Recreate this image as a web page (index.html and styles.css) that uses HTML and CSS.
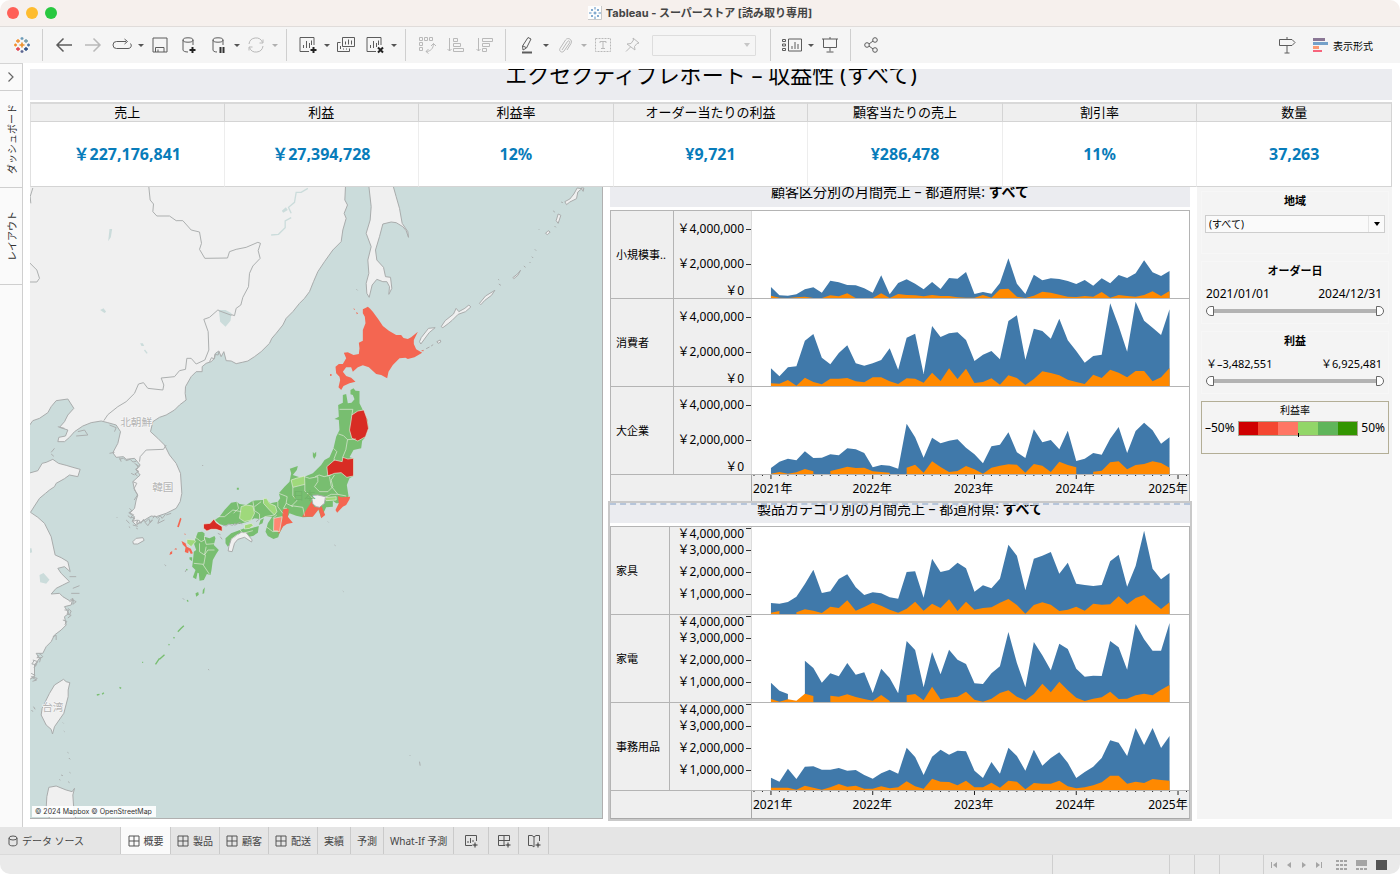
FILE: index.html
```html
<!DOCTYPE html>
<html lang="ja">
<head>
    <meta charset="UTF-8">
    <meta name="viewport" content="width=device-width, initial-scale=1.0">
    <title>Tableau - スーパーストア</title>
    <link rel="stylesheet" href="styles.css">
</head>
<body>
<div class="window">
    <header class="titlebar">
        <div class="lights">
            <span class="light red"></span>
            <span class="light yellow"></span>
            <span class="light green"></span>
        </div>
        <h1 class="window-title">
            <svg width="14" height="14" viewBox="0 0 14 14"><rect width="14" height="14" fill="#fdfdfd"/><path d="M13.500 0v13.500H0" fill="none" stroke="#c9c9c9"/><path d="M5.500 7h3M7 5.500v3M3 4h2M4 3v2M9 4h2M10 3v2M3 10h2M4 9v2M9 10h2M10 9v2M7 1v2.500M7 10.500V13M1 7h2.500M10.500 7H13" stroke="#5b8fc0" fill="none"/></svg>
            Tableau - スーパーストア [読み取り専用]
        </h1>
    </header>

    <div class="toolbar">
        <button class="tool" aria-label="Tableau"><svg viewBox="0 0 20 20"><g fill="none" stroke-width="1.300"><path d="M7.500 10h5M10 7.500v5" stroke="#eb912c" stroke-width="1.600"/><path d="M4 6h4M6 4v4" stroke="#f28e2b"/><path d="M12 6h4M14 4v4" stroke="#7099a6"/><path d="M4 14h4M6 12v4" stroke="#e03a4a"/><path d="M12 14h4M14 12v4" stroke="#1f457e"/><path d="M8.500 3.500h3M10 2v3" stroke="#6b9bb8"/><path d="M8.500 16.500h3M10 15v3" stroke="#5b6591"/><path d="M2 10h3M3.500 8.500v3" stroke="#f28e2b"/><path d="M15 10h3M16.500 8.500v3" stroke="#4e79a7"/></g></svg></button>
        <span class="sep"></span>
        <button class="tool" aria-label="元に戻す"><svg viewBox="0 0 20 20"><path d="M18 10H3M9.500 3.500L3 10l6.500 6.500" stroke-width="1.500"/></svg></button>
        <button class="tool off" aria-label="やり直す"><svg viewBox="0 0 20 20"><path d="M2 10h15M10.500 3.500L17 10l-6.500 6.500" stroke-width="1.500"/></svg></button>
        <button class="tool" aria-label="再生"><svg viewBox="0 0 20 20"><path d="M14 6.500H4.500a3.500 3.500 0 0 0 0 7h11.500a3 3 0 0 0 2.500-5M12.500 4l3 2.500-3 2.500"/></svg></button>
        <button class="caret" aria-label="再生メニュー"></button>
        <button class="tool" aria-label="保存"><svg viewBox="0 0 20 20"><path d="M3 3h14v14H3zM5.500 17v-4.500h8.500V17M8 17v-2.500"/></svg></button>
        <button class="tool" aria-label="新しいデータソース"><svg viewBox="0 0 20 20"><path d="M4 5v10c0 1 2 2 5 2M14 5v5"/><ellipse cx="9" cy="5" rx="5" ry="2.200"/><path d="M13.500 12v6M10.500 15h6" stroke="#222" stroke-width="2"/></svg></button>
        <button class="tool" aria-label="更新の一時停止"><svg viewBox="0 0 20 20"><path d="M5 5v10c0 1 1.500 2 4 2M15 5v5"/><ellipse cx="10" cy="5" rx="5" ry="2.200"/><path d="M12.500 12v6M15.500 12v6" stroke="#333" stroke-width="2"/></svg></button>
        <button class="caret" aria-label="更新メニュー"></button>
        <button class="tool off" aria-label="更新"><svg viewBox="0 0 20 20"><path d="M3 9a7 7 0 0 1 13.500-1.500M17 11a7 7 0 0 1-13.500 1.500M17 4.500V8h-3.500M3 15.500V12h3.500"/></svg></button>
        <button class="caret off" aria-label="更新オプション"></button>
        <span class="sep"></span>
        <button class="tool" aria-label="新しいワークシート"><svg viewBox="0 0 20 20"><path d="M16 10V2.500H2v14h9M5.500 13v-3M8.500 13V6M11.500 13V8M13.500 10V5.500"/><path d="M15.500 12v6M12.500 15h6" stroke="#222" stroke-width="2"/></svg></button>
        <button class="caret" aria-label="ワークシートメニュー"></button>
        <button class="tool" aria-label="複製"><svg viewBox="0 0 20 20"><path d="M6.500 2.500h12v9h-12zM4.500 7.500h-3v9h12v-3M9.500 9.500v-3M12.500 9.500v-5M15.500 9.500v-4M4.500 14v-3M7.500 14.500v-1M10.500 14.500v-1"/></svg></button>
        <button class="tool" aria-label="シートのクリア"><svg viewBox="0 0 20 20"><path d="M16 10V2.500H2v14h9M5.500 13v-3M8.500 13V6M11.500 12V8M13.500 10V5.500"/><path d="M13 12.500l5 5M18 12.500l-5 5" stroke="#222" stroke-width="2"/></svg></button>
        <button class="caret" aria-label="クリアメニュー"></button>
        <span class="sep"></span>
        <button class="tool off" aria-label="行と列の交換"><svg viewBox="0 0 20 20"><path d="M2.500 2.500h3v3h-3zM7.500 2.500h3v3h-3zM12.500 2.500h3v3h-3zM2.500 7.500h3v3h-3zM2.500 12.500h3v3h-3zM16.500 8.500c0 5-3 8-7.500 8M14 11l2.500-2.500L19 11M11.500 14L9 16.500l2.500 2"/></svg></button>
        <button class="tool off" aria-label="昇順で並べ替え"><svg viewBox="0 0 20 20"><path d="M3.500 3v13M1.500 14l2 2 2-2M7.500 3.500h4v3h-4zM7.500 8.500h7v3h-7zM7.500 13.500h10v3h-10z"/></svg></button>
        <button class="tool off" aria-label="降順で並べ替え"><svg viewBox="0 0 20 20"><path d="M3.500 3v13M1.500 14l2 2 2-2M7.500 3.500h10v3h-10zM7.500 8.500h7v3h-7zM7.500 13.500h4v3h-4z"/></svg></button>
        <span class="sep"></span>
        <button class="tool" aria-label="ハイライト"><svg viewBox="0 0 20 20"><path d="M11 2.500l3 1.500-4.500 9-3.500 2-.5-4zM6 11l3 1.500"/><path d="M5 17.500h10" stroke-width="2"/></svg></button>
        <button class="caret" aria-label="ハイライトメニュー"></button>
        <button class="tool off" aria-label="メンバーのグループ化"><svg viewBox="0 0 20 20"><path d="M7 15l5.500-8.500c1-1.500 3 0 2 1.500L9 16c-2 2.500-5.500 0-4-2.500L10.500 5c2.500-3.500 7.500 0 5.500 3.500L12 15"/></svg></button>
        <button class="caret off" aria-label="グループメニュー"></button>
        <button class="tool off" aria-label="マークラベルの表示"><svg viewBox="0 0 20 20"><path d="M2.500 3.500h15v13h-15z" stroke-dasharray="2 1"/><path d="M7 8V6.500h6V8M10 6.500v7M8 13.500h4"/></svg></button>
        <button class="tool off" aria-label="軸の固定"><svg viewBox="0 0 20 20"><path d="M11 3l6 5-2 .5-2.500 3 .5 3.500-8-6 4-.5L11.500 5zM8.500 12L4 16.500"/></svg></button>
        <div class="fit-box">
            <select class="fit" aria-label="表示サイズ" disabled><option></option></select>
            <span class="fit-arrow"></span>
        </div>
        <span class="sep"></span>
        <button class="tool" aria-label="カードの表示"><svg viewBox="0 0 20 20"><path d="M.5 4.500h3v2h-3zM.5 9h3v2h-3zM.5 13.500h3v2h-3zM6.500 4h13v12h-13zM10 14v-3M13 14V7M16 14V9"/></svg></button>
        <button class="caret" aria-label="カードメニュー"></button>
        <button class="tool" aria-label="プレゼンテーションモード"><svg viewBox="0 0 20 20"><path d="M2 4h16M3.500 4v8.500h13V4M10 2v2M10 12.500v4M6.500 17h7"/></svg></button>
        <span class="sep"></span>
        <button class="tool" aria-label="共有"><svg viewBox="0 0 20 20"><circle cx="5" cy="10" r="2.300"/><circle cx="13" cy="5" r="2.300"/><circle cx="13" cy="15" r="2.300"/><path d="M7 9l4-3M7 11l4 3"/></svg></button>
        <div class="toolbar-end">
            <button class="tool" aria-label="データガイド"><svg viewBox="0 0 20 20"><path d="M2.500 4.500H15l3 3-3 3H2.500zM10 2v2.500M10 10.500V18M7.500 18h5"/></svg></button>
            <button class="show-me">
                <svg width="16" height="16" viewBox="0 0 16 16"><path fill="#8a7795" d="M0 1h12v3H0z"/><path fill="#74a1c9" d="M0 5h15v3H0z"/><path fill="#fd9a72" d="M0 9h6v3H0z"/><path fill="#f7647c" d="M0 13h9v2H0z"/></svg>
                表示形式
            </button>
        </div>
    </div>

    <div class="workspace">
        <aside class="rail">
            <button class="rail-open" aria-label="開く"><svg width="8" height="12" viewBox="0 0 8 12"><path d="M1.500 1.500L6 6l-4.500 4.500" fill="none" stroke="#666" stroke-width="1.200"/></svg></button>
            <button class="rail-tab"><span>ダッシュボード</span></button>
            <button class="rail-tab"><span>レイアウト</span></button>
        </aside>

        <main class="dashboard">
            <h2 class="report-title"><span>エクセクティブレポート – 収益性 (すべて)</span></h2>

            <table class="kpis">
                <thead>
                    <tr><th>売上</th><th>利益</th><th>利益率</th><th>オーダー当たりの利益</th><th>顧客当たりの売上</th><th>割引率</th><th>数量</th></tr>
                </thead>
                <tbody>
                    <tr><td>￥227,176,841</td><td>￥27,394,728</td><td>12%</td><td>¥9,721</td><td>¥286,478</td><td>11%</td><td>37,263</td></tr>
                </tbody>
            </table>

            <div class="panels">
                <section class="map">
                    <svg class="map-art" viewBox="0 0 1719 1893" preserveAspectRatio="xMidYMid slice">
                        <!-- mainland, borders and lakes -->
                        <g transform="translate(-30 -21)">
                            <g class="land">
                                <path d="M27 18H978L976 60 984 75 974 100 980 115 970 150 965 185 940 210 915 245 895 275 882 305 870 335 855 355 840 370 820 395 800 415 790 435 770 460 757 475 750 490 725 515 705 530 685 543 668 547 650 551 635 543 620 542 613 515 605 530 598 513 588 520 585 535 575 545 560 550 548 560 548 575 530 575 515 590 498 620 497 640 500 660 480 675 465 690 440 705 420 712 400 725 393 755 415 775 435 795 450 825 470 850 483 880 487 940 482 965 470 985 440 1000 410 1010 395 1008 375 1020 350 1035 338 1024 345 1010 330 1000 345 985 350 960 355 945 345 930 340 905 362 885 350 870 362 855 345 835 320 838 312 830 290 832 280 818 295 790 303 755 290 735 265 728 245 723 215 728 190 738 165 755 150 772 135 785 115 785 118 772 138 768 145 750 120 742 135 725 145 705 163 685 145 657 110 662 95 680 85 698 60 715 40 722 27 740z"/>
                                <path d="M27 880L55 872 68 850 80 847 100 838 117 850 140 856 160 862 182 868 175 890 150 885 135 896 110 910 105 920 90 930 78 940 60 955 45 978 33 997 55 1012 75 1030 95 1070 107 1125 125 1133 145 1145 152 1175 135 1160 115 1165 125 1180 150 1205 130 1215 110 1225 95 1242 120 1240 130 1250 150 1262 160 1255 155 1275 135 1280 148 1300 135 1310 140 1335 125 1350 105 1365 95 1385 80 1400 70 1420 50 1420 60 1435 45 1455 45 1490 27 1500z"/>
                            </g>
                            <g class="border">
                                <path d="M388 21L392 60 402 72 400 95 412 108 450 108 470 122 490 122 515 150 540 156 546 190 540 208 556 235 624 234 630 215 650 208 680 202 715 187 723 190 716 212 722 235 700 258 690 280 687 320 670 352 664 375 650 385 645 407 595 390 570 412 553 418 566 455 568 510 556 540 530 552 515 535 502 535 498 568 480 572 465 590 425 594 433 615 430 630 385 625 372 608 357 612 345 640 320 665 295 680 265 704 253 722"/>
                                <path d="M30 248L52 270 60 295 52 306 30 306M40 24L32 50 34 70M440 795L432 808 380 810 362 830 360 845M115 740l20 5M175 755l20-5 10 15-35 3M270 735l20 8-5 12M340 905l12 5-8 15 10 20-10 15"/>
                                <path d="M335 1015l-10-8M320 1020l10 10M340 1035l15 4M375 1025l10 12 12-18M420 1015l-5 15 20-10M440 1005l15-5M270 820l15-3M300 833l5 12M345 850l15 10M335 880l10 5M105 805l-10 12M95 822l8 7M150 1190l20 0M160 1225l20-8M155 1240l25 0M145 1285l10 8-5 12M160 1260l10 5M60 1420l10 10-12 8M40 1440l15 5-10 15M35 1490l18 5-8 8"/>
                                <path d="M330 985l8 8-10 5 14 6-8 8 12 2-6 10 14-4-2 12 10-6M350 1028l8-8 6 10 8-12 6 8 10-10 4 12 8-8M400 1015l6-8 8 8 8-8 6 8 10-12M292 1012l2 2M328 1040l4 3M350 1044l5 3M300 838l12-4 8 8 12-4 8 8 10-2M350 852l6 10-8 6 10 6-12 8 8 6M570 545l6-12 8 4 2-14 10 2 2-10M150 1265l12-6-2 14 10-8M135 1290l12 0-4 12 12 4-10 8M130 1320l12 4-6 10M100 1370l10-4 0 14M60 1425l-8 8 12 0-4 14M45 1440l-8 12 14 2-8 10M35 1480l12 6-10 6 14 8-12 4"/>
                            </g>
                            <path class="lake" d="M598 390l20 0 18 10-3 22-15 18-16-15zM270 147l8 0-4 25-8 12zM242 390l10-5 8 10-5 4zM787 92l12-10 6 8-14 8zM362 490l8 0 4 8-8 0z"/>
                            <path class="river" d="M755 165l22-2 20-20 0-20 18-10M815 100l-8-18 18-15 5-30 15 0 20-12M375 510l8 10"/>
                            <path class="border" d="M598 392L636 406"/>
                            <path class="lake" d="M60 1185l12-6 18 20-10 12-18-4zM28 1105l8 0 2 12-8 2z"/>
                        </g>

                        <!-- Sakhalin and Kuril islands -->
                        <g class="land" transform="translate(810 -21)">
                            <path d="M208 18L215 80 212 120 200 160 215 200 205 240 208 280 200 310 202 340 209 352 218 315 232 298 250 305 262 305 270 320 268 343 277 325 273 292 258 290 252 262 232 240 228 210 240 170 250 132 275 126 290 128 310 140 320 152 327 172 325 155 308 130 300 85 290 50 281 18z"/>
                            <path d="M360 485l5-12 22-28 20-2-18 15-25 34zM425 440l12-18 25-20 8-17 8 10 18-10 12-10 6 6-16 14-22 8-18 18-12 10-16 12zM540 370l18-22 28-17-10 15-20 15-12 13zM640 293l15-12 8-10-8 15-12 10zM796 65l15-8 12-15 10-18 14 2-12 10-4 20-20 10-10 8zM845 24l8 0-2 10zM770 122l6-20 8 4-8 24zM738 160l8-8 6 4-8 8zM762 92l3 5M765 138l4 4M785 66l5 2M706 208l4 4M697 230l4 4M690 246l3 3M673 258l5 4M718 148l2 2M598 312l6 4M596 298l3 2M412 485l10-5 2 6-8 4zM395 498l6-4M380 506l10-5M171 328l3 3"/>
                        </g>

                        <!-- Hokkaido -->
                        <path class="p-salmon" transform="translate(810 -21)" d="M190 388L198 384 205 380 212 386 220 395 238 420 250 438 268 452 290 465 305 465 312 474 325 477 335 472 355 455 343 480 343 492 350 508 368 518 345 532 325 537 318 533 300 535 280 555 267 575 263 595 245 585 230 582 208 562 190 556 175 562 160 575 155 562 140 562 130 575 140 588 155 593 168 605 150 610 132 618 125 630 117 622 122 600 120 590 110 580 108 560 118 552 130 552 140 535 133 518 145 517 162 525 178 522 180 505 178 488 190 482 190 450 198 430 196 410 190 400zM92 582l4 0 0 6-4 0zM162 384l4 4-2 3zM170 396l6 4-4 3zM364 513l8-4 0 5z"/>

                        <!-- Honshu, Shikoku, Kyushu -->
                        <g transform="translate(360 549)">
                            <g class="p-green">
                                <path d="M580 75L590 72 595 100 606 98 615 88 610 75 603 73 603 60 612 55 618 62 630 63 630 100 640 120 655 150 657 175 645 205 638 212 635 235 612 240 600 262 612 265 612 318 600 325 592 345 597 378 590 395 570 400 560 400 550 392 550 410 530 412 515 443 505 415 490 430 488 440 460 442 440 437 420 430 415 440 400 470 390 490 386 502 372 507 355 498 348 485 355 460 368 440 345 440 330 447 315 445 295 455 270 462 240 462 225 467 210 462 196 450 210 440 225 420 245 398 262 395 270 402 290 405 310 392 340 390 350 385 362 400 385 395 392 385 388 370 405 350 420 335 425 310 421 296 445 288 442 300 430 315 450 322 465 320 490 310 515 285 525 270 540 262 552 235 560 200 570 180 568 150 555 147 568 140 566 105 580 98z"/>
                                <path d="M228 505L245 490 285 475 305 475 328 468 325 488 312 497 300 500 262 500 245 520 235 530 228 520zM328 465l5-15 10-5-4 15z"/>
                                <path d="M145 487L158 485 165 490 165 500 180 505 195 498 198 505 193 525 208 540 200 552 190 570 186 600 183 615 172 612 163 630 150 632 148 610 144 608 140 628 130 622 138 600 128 590 130 575 133 545 140 540 133 520 140 500zM120 562l8 0 0 12-8-6zM138 670l8-4 2 8-8 6zM160 660l6-8-2 18-5 2zM490 245l4 6 6-6 0 12-6 10-4-8zM262 353l6 0 0 6-6 0z"/>
                            </g>
                            <path class="p-lime" d="M425 330L440 325 465 318 466 343 430 352zM525 383L560 380 560 390 530 392zM342 385L352 386 360 400 378 408 382 425 375 435 358 418 342 400zM275 410L290 405 310 408 315 430 305 450 285 455 270 445zM285 465L305 460 312 466 300 475 285 477zM112 508L135 510 138 515 125 530 112 520z"/>
                            <path class="p-red" d="M607 135L625 123 643 120 652 145 657 175 648 200 625 213 607 205 600 180 605 150zM532 290L555 270 578 275 580 262 595 267 612 265 612 318 592 322 575 308 555 310 535 318zM162 462L182 460 193 447 200 458 218 470 218 484 200 478 185 478 172 483 162 475z"/>
                            <path class="p-salmon" d="M565 378L575 382 602 380 600 388 590 405 580 410 563 428 558 420 568 400zM487 394L495 412 515 405 527 435 515 445 508 418 490 440 458 440 470 420zM400 420L410 415 418 418 415 440 430 458 412 462 400 470 388 492 385 480 398 450zM96 513L108 520 112 530 124 536 130 550 124 552 118 540 116 550 106 546 108 532 100 524zM92 443L96 446 88 472 83 470zM62 547l6-4 0 8-8 4zM74 538l6-4 2 5zM105 490l4 3-3 2z"/>
                            <path class="p-pink" d="M373 445L398 440 390 485 372 482z"/>
                            <path class="land" d="M487 385L490 376 505 375 528 380 525 400 510 412 500 410 490 402zM238 530L245 508 262 495 275 487 290 488 308 510 306 516 285 502 265 508 255 520 248 545 236 543z"/>
                            <g class="pref">
                                <path d="M570 118h40l-3 17M567 192l15 5 12 12 25-2M594 209l-5 30-10 24M552 235l10 10-8 20 0 8M497 320l12-5 15 5 20-5M465 320l15 5 25-5 0 15-10 15 15 15 25 0 15-15-5-20 10-15M540 320l5 28 20 25 25 5M565 373l-20 0-20 10M430 352l0 25 12 15-15 15M466 343l0 20 22 20M388 370l25 10-3 20 20 10M410 400l-8 15 10 0M425 407l35 5 5 25M385 395l0 15 15 20M382 435l-12 10M310 392l5 30 15 10 0 15M262 395l5 20-15 15M205 440l20 0 25-20 25 5M315 410l20-15M345 440l30-5M350 470l20 15 15-2"/>
                                <path d="M135 500l20 15 10-5 0-12M165 505l5 18 25-2M150 520l0 25 15 10 5-25M165 555l10-15 20 0M133 580l30 3 5-28M160 583l20 30M270 478l10 12 30-8M245 508l20-15"/>
                            </g>
                            <path class="border" d="M158 285l3 3M46 584l3 3M220 465l10 3 8-6 10 4 10-6M320 455l10-8M255 466l15-8 8 4M100 685l4 4M535 455l2 2M555 525l3 2M580 663l2 2M110 600l-3 6M205 490l8 4M212 500l6 8"/>
                        </g>

                        <!-- southern islands, Taiwan, Jeju, Luzon -->
                        <g transform="translate(-30 939)">
                            <g class="land">
                                <path d="M132 538L140 545 151 548 146 570 146 590 133 640 105 680 99 702 95 688 80 675 65 645 68 625 80 600 90 580 105 555zM340 125L350 115 370 113 374 121 355 132 342 132zM88 862L110 858 140 870 158 875 165 865 160 885 162 915 168 955 90 955 80 925 82 890z"/>
                                <path d="M144 757l3 2M148 774l4 4M150 817l3 2M125 825l5 2M146 845l4 3M120 838l2 3M130 668l2 2M133 693l2 2M42 620l5 8M36 630l4 5M436 195l2 2M566 508l3 2M1170 765l2 2M1200 785l2 12"/>
                            </g>
                            <path class="isle" d="M475 395l10-10 8-8M462 412l3 3M447 433l3 2M408 493l12-18M420 478l15-14M232 585l8-2M248 583l5-5M300 562l5 3M368 487l3 0M500 208l4 2M503 300l3 5"/>
                        </g>
                        <g class="places">
                            <text x="272" y="716">北朝鮮</text>
                            <text x="368" y="911">韓国</text>
                            <text x="38" y="1572">台湾</text>
                        </g>
                        <text class="japan" x="790" y="938">日本</text>
                    </svg>
                    <p class="credit">© 2024 Mapbox © OpenStreetMap</p>
                </section>

                <div class="charts">
                    <section class="chart segment">
                        <h3 class="chart-title"><span>顧客区分別の月間売上 – 都道府県: <b>すべて</b></span></h3>
                        <div class="chart-body">
                            <div class="row">
                                <div class="row-name">小規模事..</div>
                                <div class="y-axis"><span>￥4,000,000</span><span>￥2,000,000</span><span>￥0</span></div>
                                <svg class="plot" data-series="small"></svg>
                            </div>
                            <div class="row">
                                <div class="row-name">消費者</div>
                                <div class="y-axis"><span>￥4,000,000</span><span>￥2,000,000</span><span>￥0</span></div>
                                <svg class="plot" data-series="consumer"></svg>
                            </div>
                            <div class="row">
                                <div class="row-name">大企業</div>
                                <div class="y-axis"><span>￥4,000,000</span><span>￥2,000,000</span><span>￥0</span></div>
                                <svg class="plot" data-series="corporate"></svg>
                            </div>
                            <div class="x-axis">
                                <div class="x-scale">
                                    <svg class="ticks"></svg>
                                    <div class="years"><span>2021年</span><span>2022年</span><span>2023年</span><span>2024年</span><span>2025年</span></div>
                                </div>
                            </div>
                        </div>
                    </section>

                    <section class="chart category">
                        <h3 class="chart-title"><span>製品カテゴリ別の月間売上 – 都道府県: <b>すべて</b></span></h3>
                        <div class="chart-body">
                            <div class="row">
                                <div class="row-name">家具</div>
                                <div class="y-axis"><span>￥4,000,000</span><span>￥3,000,000</span><span>￥2,000,000</span><span>￥1,000,000</span></div>
                                <svg class="plot" data-series="furniture"></svg>
                            </div>
                            <div class="row">
                                <div class="row-name">家電</div>
                                <div class="y-axis"><span>￥4,000,000</span><span>￥3,000,000</span><span>￥2,000,000</span><span>￥1,000,000</span></div>
                                <svg class="plot" data-series="tech"></svg>
                            </div>
                            <div class="row">
                                <div class="row-name">事務用品</div>
                                <div class="y-axis"><span>￥4,000,000</span><span>￥3,000,000</span><span>￥2,000,000</span><span>￥1,000,000</span></div>
                                <svg class="plot" data-series="office"></svg>
                            </div>
                            <div class="x-axis">
                                <div class="x-scale">
                                    <svg class="ticks"></svg>
                                    <div class="years"><span>2021年</span><span>2022年</span><span>2023年</span><span>2024年</span><span>2025年</span></div>
                                </div>
                            </div>
                        </div>
                    </section>
                </div>

                <aside class="filters">
                    <div class="filter">
                        <label class="filter-title" for="region">地域</label>
                        <div class="select-box">
                            <select id="region"><option>(すべて)</option></select>
                            <span class="arrow"></span>
                        </div>
                    </div>
                    <div class="filter">
                        <h4 class="filter-title">オーダー日</h4>
                        <div class="range-values dates"><label for="date-from">2021/01/01</label><label for="date-to">2024/12/31</label></div>
                        <div class="range">
                            <input type="range" class="from" id="date-from" min="0" max="100" value="0">
                            <input type="range" class="to" id="date-to" min="0" max="100" value="100">
                        </div>
                    </div>
                    <div class="filter">
                        <h4 class="filter-title">利益</h4>
                        <div class="range-values"><label for="profit-from">￥–3,482,551</label><label for="profit-to">￥6,925,481</label></div>
                        <div class="range">
                            <input type="range" class="from" id="profit-from" min="0" max="100" value="0">
                            <input type="range" class="to" id="profit-to" min="0" max="100" value="100">
                        </div>
                    </div>
                    <div class="filter legend">
                        <h4 class="filter-title">利益率</h4>
                        <div class="legend-scale">
                            <span>–50%</span>
                            <div class="ramp"><i></i><i></i><i></i><i></i><i></i><i></i></div>
                            <span>50%</span>
                        </div>
                    </div>
                </aside>
            </div>
        </main>
    </div>

    <nav class="sheets">
        <button class="sheet source"><svg width="10" height="12" viewBox="0 0 10 12"><path d="M1 3v6c0 2.500 8 2.500 8 0V3"/><ellipse cx="5" cy="3" rx="4" ry="2"/></svg>データ ソース</button>
        <button class="sheet active"><svg width="12" height="12" viewBox="0 0 12 12"><path d="M1 1h10v10H1zM6 1v10M1 6h10"/></svg>概要</button>
        <button class="sheet"><svg width="12" height="12" viewBox="0 0 12 12"><path d="M1 1h10v10H1zM6 1v10M1 6h10"/></svg>製品</button>
        <button class="sheet"><svg width="12" height="12" viewBox="0 0 12 12"><path d="M1 1h10v10H1zM6 1v10M1 6h10"/></svg>顧客</button>
        <button class="sheet"><svg width="12" height="12" viewBox="0 0 12 12"><path d="M1 1h10v10H1zM6 1v10M1 6h10"/></svg>配送</button>
        <button class="sheet plain">実績</button>
        <button class="sheet plain">予測</button>
        <button class="sheet plain">What-If 予測</button>
        <button class="sheet new" aria-label="新しいワークシート"><svg width="14" height="14" viewBox="0 0 14 14"><path d="M12.500 7V1.500h-11v10H8M4 9V7M6.500 9V4M9 8V6"/><path class="plus" d="M11 8.500v5M8.500 11h5"/></svg></button>
        <button class="sheet new" aria-label="新しいダッシュボード"><svg width="14" height="14" viewBox="0 0 14 14"><path d="M12.500 7V1.500h-11v10H8M7 1.500v10M1.500 6.500h11"/><path class="plus" d="M11 8.500v5M8.500 11h5"/></svg></button>
        <button class="sheet new" aria-label="新しいストーリー"><svg width="14" height="14" viewBox="0 0 14 14"><path d="M12.500 7V1.500H9l-2 1.500-2-1.500H1.500v10H5L7 13V3"/><path class="plus" d="M11 8.500v5M8.500 11h5"/></svg></button>
    </nav>

    <footer class="status">
        <span class="cell wide"></span>
        <span class="cell"></span>
        <span class="cell"></span>
        <span class="cell mid"></span>
        <div class="pager">
            <button aria-label="最初"><svg width="8" height="8" viewBox="0 0 8 8"><path d="M1 1h1v6H1zM7 1v6L3 4z"/></svg></button>
            <button aria-label="前へ"><svg width="8" height="8" viewBox="0 0 8 8"><path d="M6 1v6L2 4z"/></svg></button>
            <button aria-label="次へ"><svg width="8" height="8" viewBox="0 0 8 8"><path d="M2 1v6l4-3z"/></svg></button>
            <button aria-label="最後"><svg width="8" height="8" viewBox="0 0 8 8"><path d="M6 1h1v6H6zM1 1v6l4-3z"/></svg></button>
        </div>
        <div class="views">
            <button aria-label="シートソーター"><svg width="12" height="10" viewBox="0 0 12 10"><path d="M0 0h3v2H0zM4 0h3v2H4zM8 0h3v2H8zM0 4h3v2H0zM4 4h3v2H4zM8 4h3v2H8zM0 8h3v2H0zM4 8h3v2H4zM8 8h3v2H8z"/></svg></button>
            <button aria-label="フィルムストリップ"><svg width="12" height="10" viewBox="0 0 12 10"><path d="M0 0h11v6H0zM0 8h3v2H0zM4 8h3v2H4zM8 8h3v2H8z"/></svg></button>
            <button class="on" aria-label="タブの表示"><svg width="12" height="10" viewBox="0 0 12 10"><path d="M0 0h11v10H0z"/></svg></button>
        </div>
    </footer>
</div>
<script src="charts.js"></script>
</body>
</html>
```

FILE: styles.css
```css
* {
    margin: 0;
    padding: 0;
    box-sizing: border-box;
}

body {
    font-family: "Noto Sans", "Noto Sans CJK JP", sans-serif;
    font-size: 11px;
    color: #000;
    background: #fff;
}

button {
    font: inherit;
    color: inherit;
    background: none;
    border: none;
    cursor: pointer;
}

svg {
    display: block;
}

.window {
    display: flex;
    flex-direction: column;
    min-height: 100vh;
    border-radius: 10px;
    overflow: hidden;
    background: #fff;
}

/* title bar */
.titlebar {
    display: grid;
    grid-template-columns: 1fr auto 1fr;
    align-items: center;
    height: 27px;
    padding: 0 7px;
    background: #f6f0ed;
    border-bottom: 1px solid #e0dcda;
}

.lights {
    display: flex;
    gap: 7px;
}

.light {
    width: 12px;
    height: 12px;
    border-radius: 50%;
}

.light.red { background: #ff5f57; }
.light.yellow { background: #febc2e; }
.light.green { background: #28c840; }

.window-title {
    display: flex;
    align-items: center;
    gap: 4px;
    font-family: Inter, "Noto Sans CJK JP", sans-serif;
    font-size: 11px;
    font-weight: 700;
    line-height: 16px;
    color: #444;
}

/* toolbar */
.toolbar {
    display: flex;
    align-items: center;
    gap: 8px;
    height: 36px;
    padding: 0 27px 0 12px;
    background: #f5f5f5;
}

.tool {
    width: 20px;
    height: 20px;
    flex: none;
}

.tool + .tool {
    margin-left: 1px;
}

.tool svg {
    width: 20px;
    height: 20px;
    fill: none;
    stroke: #5c5c5c;
}

.tool.off svg {
    stroke: #b9b9b9;
}

.caret {
    width: 8px;
    height: 20px;
    margin: 0 -3px;
    flex: none;
}

.caret::before {
    content: "";
    display: block;
    width: 0;
    margin: 0 auto;
    border: 3px solid transparent;
    border-top-color: #555;
    border-bottom: none;
}

.caret.off::before {
    border-top-color: #b0b0b0;
}

.sep {
    width: 1px;
    height: 32px;
    margin: 0 3px 0 2px;
    background: #cfcfcf;
}

.fit-box {
    position: relative;
    margin: 0 4px 0 2px;
}

.fit {
    display: block;
    width: 104px;
    height: 21px;
    border: 1px solid #d3d3d3;
    border-radius: 1px;
    appearance: none;
    background: #f5f5f5;
}

.fit-arrow {
    position: absolute;
    top: 8px;
    right: 6px;
    border: 3px solid transparent;
    border-top: 4px solid #c6c6c6;
    border-bottom: none;
    pointer-events: none;
}

.toolbar-end {
    display: flex;
    align-items: center;
    gap: 16px;
    margin-left: auto;
}

.show-me {
    display: flex;
    align-items: center;
    gap: 4px;
    font-size: 10px;
}

/* workspace */
.workspace {
    display: flex;
    flex: 1;
}

.rail {
    display: flex;
    flex-direction: column;
    flex: none;
    width: 23px;
    background: #fafafa;
    border-right: 1px solid #cfcfcf;
    border-top: 1px solid #d4d4d4;
}

.rail-open {
    display: flex;
    align-items: center;
    justify-content: center;
    height: 27px;
    border-bottom: 1px solid #cfcfcf;
}

.rail-tab {
    display: flex;
    align-items: center;
    justify-content: center;
    height: 97px;
    border-bottom: 1px solid #cfcfcf;
    font-size: 10px;
    color: #333;
}

.rail-tab span {
    writing-mode: vertical-rl;
    text-orientation: sideways;
    transform: rotate(180deg);
}

.dashboard {
    flex: 1;
    min-width: 0;
    padding: 6px 8px 7px 7px;
}

.report-title {
    display: flex;
    justify-content: center;
    height: 31px;
    overflow: hidden;
    background: #ebecf0;
    font-size: 22px;
    font-weight: 400;
}

.report-title span {
    margin-top: -6px;
    line-height: 22px;
    height: 22px;
    white-space: nowrap;
}

.kpis {
    width: 100%;
    margin-top: 2px;
    table-layout: fixed;
    border-collapse: separate;
    border-spacing: 0;
    text-align: center;
}

.kpis th {
    height: 20px;
    line-height: 17px;
    font-size: 13px;
    font-weight: 400;
    background: #efefef;
    border-top: 2px solid #d9d9d9;
    border-bottom: 1px solid #d4d4d4;
    border-right: 1px solid #d4d4d4;
}

.kpis td {
    height: 65px;
    font-size: 16px;
    font-weight: 700;
    line-height: 20px;
    color: #087cba;
    border-right: 1px solid #ededed;
    border-bottom: 1px solid #d4d4d4;
}

.kpis th:first-child,
.kpis td:first-child {
    border-left: 1px solid #e0e0e0;
}

.kpis td:last-child {
    border-right-color: #d4d4d4;
}

.panels {
    display: grid;
    grid-template-columns: 573fr 580fr 195px;
    gap: 7px;
}

/* map */
.map {
    position: relative;
    background: #cbdcdb;
    border-right: 1px solid #b0b0b0;
    border-bottom: 1px solid #b0b0b0;
    overflow: hidden;
}

.map-art {
    width: 100%;
    height: 100%;
}

.land {
    fill: #f0f0f0;
    stroke: #a9acac;
    stroke-width: 3;
}

.border {
    fill: none;
    stroke: #acafaf;
    stroke-width: 3;
}

.lake {
    fill: #cbdcdb;
}

.river {
    fill: none;
    stroke: #cbdcdb;
    stroke-width: 4;
}

.p-green { fill: #78be70; }
.p-lime { fill: #9fd97b; }
.p-red { fill: #d82c24; }
.p-salmon { fill: #f46651; }
.p-pink { fill: #ff8673; }

.p-lime,
.p-red,
.p-pink {
    stroke: #e4eadd;
    stroke-width: 2;
}

.pref {
    fill: none;
    stroke: #e4eadd;
    stroke-width: 2;
}

.isle {
    fill: none;
    stroke: #78be70;
    stroke-width: 4;
}

.places text {
    font-size: 32px;
    fill: #b4b4b4;
    stroke: #f6f6f6;
    stroke-width: 4;
    paint-order: stroke;
}

.japan {
    font-size: 34px;
    fill: #70b469;
}

.credit {
    position: absolute;
    left: 2px;
    bottom: 1px;
    padding: 0 4px 0 3px;
    background: rgba(255, 255, 255, 0.9);
    font-family: Inter, sans-serif;
    font-size: 7px;
    line-height: 11px;
    color: #333;
}

/* charts */
.chart-title {
    display: flex;
    justify-content: center;
    height: 20px;
    overflow: hidden;
    background: #ebecf0;
    font-size: 14px;
    font-weight: 400;
}

.chart-title span {
    margin-top: -5px;
    height: 20px;
    line-height: 20px;
    white-space: nowrap;
}

.chart-body {
    margin-top: 3px;
    border: 1px solid #b4b4b4;
    border-bottom-color: #a8a8a8;
}

.category {
    box-shadow: 0 0 0 2px #c9c9c9;
}

.category .chart-title {
    border-top: 2px dashed #b6c5da;
}

.category .chart-title span {
    margin-top: -6px;
}

.row {
    display: grid;
    grid-template-columns: 63px 78px 1fr;
    height: 88px;
    border-bottom: 1px solid #b4b4b4;
}

.category .row {
    grid-template-columns: 59px 82px 1fr;
}

.row-name {
    display: flex;
    align-items: center;
    padding: 0 0 2px 5px;
    background: #efefef;
    border-right: 1px solid #b4b4b4;
    white-space: nowrap;
}

.y-axis {
    display: flex;
    flex-direction: column;
    gap: 23px;
    padding-top: 12px;
    background: #efefef;
    border-right: 1px solid #dcdcdc;
    font-size: 12px;
}

.y-axis span {
    display: flex;
    align-items: center;
    justify-content: flex-end;
    gap: 2px;
    height: 12px;
    line-height: 12px;
}

.y-axis span::after {
    content: "";
    width: 5px;
    height: 1px;
    background: #333;
}

.segment .y-axis span:last-child {
    margin-top: -8px;
}

.segment .y-axis span:last-child::after {
    background: none;
}

.category .y-axis {
    gap: 10px;
    padding-top: 1px;
}

.category .y-axis span:nth-child(2) {
    margin-top: -6px;
}

.category .y-axis span:first-child {
    align-items: flex-start;
}

.plot {
    width: 100%;
    height: 87px;
}

.plot .sales { fill: #4079aa; }
.plot .profit { fill: #ff8900; }

.x-axis {
    height: 27px;
    padding-left: 140px;
    background: #efefef;
}

.x-scale {
    height: 27px;
    border-left: 1px solid #a8a8a8;
}

.ticks {
    width: 100%;
    height: 4px;
}

.ticks path {
    stroke: #222;
    stroke-width: 1;
    vector-effect: non-scaling-stroke;
}

.years {
    display: grid;
    grid-template-columns: 100fr 102fr 102fr 93fr 41fr;
    padding-left: 1px;
    font-size: 12px;
    line-height: 20px;
    white-space: nowrap;
}

/* filters */
.filters {
    display: flex;
    flex-direction: column;
    gap: 7px;
    padding: 4px 3px 4px 4px;
    background: #f4f4f4;
}

.filter {
    height: 63px;
    padding: 0 3px;
    border: 1px solid #f7f7f7;
}

.filter-title {
    display: block;
    font-size: 11px;
    font-weight: 700;
    line-height: 18px;
    text-align: center;
}

.select-box {
    position: relative;
    margin-top: 5px;
}

.select-box select {
    display: block;
    width: 100%;
    height: 18px;
    padding-left: 3px;
    appearance: none;
    border: 1px solid #cdcdcd;
    border-radius: 0;
    background: #fafafa;
    font-family: inherit;
    font-size: 10px;
    color: #000;
}

.arrow {
    position: absolute;
    top: 1px;
    right: 1px;
    width: 16px;
    height: 16px;
    border-left: 1px solid #e4e4e4;
    pointer-events: none;
}

.arrow::before {
    content: "";
    display: block;
    width: 0;
    margin: 6px auto 0;
    border: 3px solid transparent;
    border-top: 4px solid #000;
    border-bottom: none;
}

.range-values {
    display: flex;
    justify-content: space-between;
    margin-top: 5px;
    padding: 0 3px 0 1px;
    font-size: 11px;
    line-height: 18px;
}

.range-values.dates {
    font-size: 12px;
}

.range {
    display: grid;
    align-items: center;
    height: 16px;
    padding: 0 1px;
}

.range input {
    grid-area: 1 / 1;
    width: 100%;
    height: 10px;
    appearance: none;
    background: none;
    pointer-events: none;
}

.range .from {
    background: linear-gradient(#b3b3b3, #b3b3b3) center / 164px 4px no-repeat;
}

.range input::-webkit-slider-thumb {
    appearance: none;
    width: 8px;
    height: 10px;
    background: #fff;
    border: 1px solid #666;
    border-radius: 5px 0 0 5px;
    pointer-events: auto;
}

.range .to::-webkit-slider-thumb {
    border-radius: 0 5px 5px 0;
}

.legend {
    height: 53px;
    border-color: #b3ae96;
}

.legend .filter-title {
    font-size: 10px;
    font-weight: 400;
    line-height: 16px;
}

.legend-scale {
    display: flex;
    align-items: center;
    gap: 3px;
    margin-top: 2px;
    font-size: 12px;
    line-height: 16px;
}

.ramp {
    position: relative;
    display: flex;
    flex: 1;
    height: 15px;
    border: 1px solid #a9a58f;
}

.ramp::after {
    content: "";
    position: absolute;
    left: 50%;
    bottom: -2px;
    width: 1px;
    height: 4px;
    background: #000;
}

.ramp i {
    flex: 1;
}

.ramp i:nth-child(1) { background: #cf0000; }
.ramp i:nth-child(2) { background: #f44730; }
.ramp i:nth-child(3) { background: #ff7664; }
.ramp i:nth-child(4) { background: #92d668; }
.ramp i:nth-child(5) { background: #60b55a; }
.ramp i:nth-child(6) { background: #339500; }

/* sheet tabs */
.sheets {
    display: flex;
    height: 28px;
    background: #e5e5e5;
    border-bottom: 1px solid #dadada;
}

.sheet {
    display: flex;
    align-items: center;
    justify-content: center;
    gap: 4px;
    width: 49px;
    border-right: 1px solid #cacaca;
    font-size: 10px;
    color: #444;
    white-space: nowrap;
}

.sheet svg {
    fill: none;
    stroke: #555;
}

.sheet .plus {
    stroke: #333;
}

.sheet.source {
    width: 121px;
    justify-content: flex-start;
    padding-left: 8px;
}

.sheet.active {
    background: #fafafa;
    width: 50px;
}

.sheet.plain {
    width: auto;
    padding: 0 6px;
}

.sheet.new {
    width: 30px;
}

.sheet.plain + .new {
    width: 35px;
}

.status {
    display: flex;
    justify-content: flex-end;
    height: 19px;
    background: #eaeaea;
}

.cell {
    width: 25px;
    border-left: 1px solid #cfcfcf;
}

.cell.wide {
    width: 117px;
}

.cell.mid {
    width: 44px;
}

.pager,
.views {
    display: flex;
    align-items: center;
    border-left: 1px solid #cfcfcf;
}

.pager {
    gap: 7px;
    padding: 0 7px 0 6px;
    fill: #a5a5a5;
}

.views {
    gap: 8px;
    padding: 0 12px 0 6px;
    border-left: none;
    fill: #a5a5a5;
}

.views .on {
    fill: #555;
}
```

FILE: charts.js
```js
// Monthly series, Jan 2021 - Dec 2024. Values are y positions on a grid
// three units to the pixel; base is the zero line, null is a missing month.
const series = {
    small: {
        base: 354,
        sales: [321,346,347,343,328,322,338,302,307,315,316,325,338,286,343,309,298,311,328,306,327,294,296,276,342,336,341,309,235,311,342,284,301,295,297,303,312,300,317,295,310,285,294,280,241,277,288,273],
        profit: [347,353,354,352,350,354,354,346,349,340,354,354,354,340,354,342,345,346,349,345,348,348,352,353,353,345,353,328,326,350,354,347,335,338,344,350,351,348,350,336,353,345,348,350,345,334,348,333]
    },
    consumer: {
        base: 620,
        sales: [567,591,564,561,484,464,535,555,521,498,552,559,552,542,507,571,475,463,584,440,473,462,459,482,545,526,515,540,425,408,541,448,455,478,418,483,515,550,530,526,372,440,517,367,424,445,467,390],
        profit: [612,613,602,619,595,608,615,598,598,596,606,609,594,594,606,614,597,598,610,580,605,567,599,568,611,608,597,616,588,596,617,599,576,581,588,601,608,614,586,596,571,580,594,575,575,606,594,566]
    },
    corporate: {
        base: 885,
        sales: [867,848,839,844,817,837,836,826,829,808,811,822,865,858,860,869,734,775,836,776,793,785,781,806,826,853,802,797,760,820,837,751,790,783,811,755,846,839,822,827,779,744,822,756,731,754,794,775],
        profit: [884,879,884,880,870,877,null,876,870,863,867,866,877,879,881,null,866,857,881,847,864,879,876,861,871,884,866,860,856,857,881,855,860,879,848,858,865,null,878,875,850,847,871,858,855,847,852,866]
    },
    furniture: {
        base: 343,
        sales: [310,312,307,291,253,210,280,275,238,224,263,286,278,281,293,297,217,215,294,177,217,211,189,206,276,257,266,237,135,168,272,177,168,157,222,189,252,256,259,256,185,165,261,199,93,207,239,220],
        profit: [339,334,null,338,329,333,340,321,325,302,333,322,309,318,330,339,327,306,333,312,325,299,334,306,330,325,323,309,298,316,342,316,308,315,334,330,321,333,312,315,314,290,314,295,286,308,328,308]
    },
    tech: {
        base: 607,
        sales: [549,573,583,null,483,505,549,521,530,490,525,518,580,507,535,581,424,451,563,457,524,450,480,493,551,553,521,500,397,490,563,427,467,512,432,448,507,531,528,529,424,443,510,373,419,453,453,370],
        profit: [598,606,599,603,582,589,null,588,591,584,592,598,603,586,604,null,587,583,602,561,599,594,591,576,600,606,597,580,572,591,602,583,552,578,546,572,594,604,597,593,576,598,597,587,582,587,570,556]
    },
    office: {
        base: 871,
        sales: [834,846,807,838,801,800,810,810,805,813,811,826,837,821,810,822,744,772,826,771,750,765,753,755,813,835,787,822,744,769,813,750,798,775,758,789,835,817,801,775,722,729,769,685,736,685,745,709],
        profit: [864,864,864,870,858,864,870,863,853,861,858,867,867,860,866,863,845,860,867,837,846,847,857,843,863,863,849,864,843,846,869,850,852,852,843,860,866,863,857,848,828,828,852,846,850,838,841,843]
    }
};

const LEFT = 57;
const STEP = 25.5;
const WIDTH = 1314;

function area(points, base) {
    let d = '';
    let open = false;
    points.forEach((y, i) => {
        if (y === null) return;
        const x = LEFT + STEP * i;
        d += open ? `L${x} ${y}` : `M${x} ${base}V${y}`;
        open = true;
        if (i === points.length - 1 || points[i + 1] === null) {
            d += `V${base}Z`;
            open = false;
        }
    });
    return d;
}

document.querySelectorAll('.plot').forEach(svg => {
    const s = series[svg.dataset.series];
    svg.setAttribute('viewBox', `0 ${s.base - 261} ${WIDTH} 261`);
    svg.setAttribute('preserveAspectRatio', 'none');
    svg.innerHTML = `<path class="sales" d="${area(s.sales, s.base)}"/><path class="profit" d="${area(s.profit, s.base)}"/>`;
});

// month ticks, with a longer one each January
document.querySelectorAll('.ticks').forEach(svg => {
    svg.setAttribute('viewBox', `0 0 ${WIDTH} 4`);
    svg.setAttribute('preserveAspectRatio', 'none');
    let marks = '';
    for (let i = -2; i <= 49; i++) {
        marks += `<path d="M${LEFT + STEP * i} 0v${i % 12 === 0 ? 4 : 1}"/>`;
    }
    svg.innerHTML = marks;
});
```
